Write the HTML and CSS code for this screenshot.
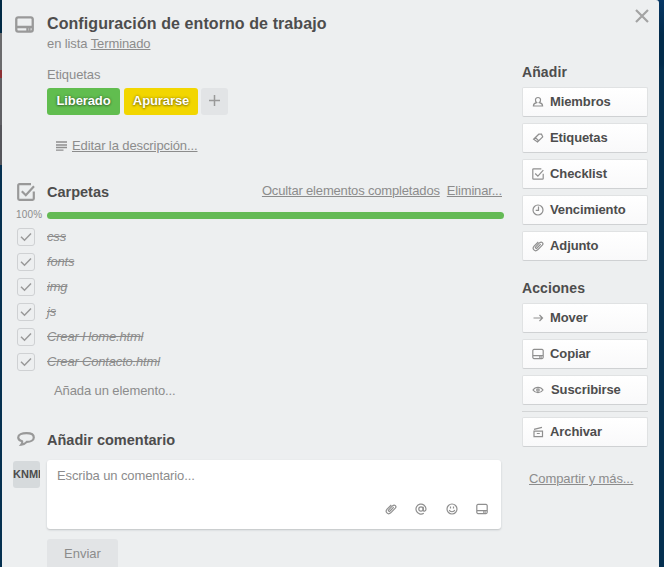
FILE: index.html
```html
<!DOCTYPE html>
<html lang="es">
<head>
<meta charset="utf-8">
<title>Configuración de entorno de trabajo</title>
<link rel="stylesheet" href="styles.css">
</head>
<body>
<svg class="sprite" aria-hidden="true">
  <symbol id="card" viewBox="0 0 18 16"><path d="M3 1.200h12a1.800 1.800 0 0 1 1.800 1.800v10a1.800 1.800 0 0 1-1.800 1.800H3A1.800 1.800 0 0 1 1.200 13V3A1.800 1.800 0 0 1 3 1.200zM1.500 10.400h15M11.800 10.400v4M13.300 12.700h1.500"/></symbol>
  <symbol id="check-box" viewBox="0 0 18 18"><path d="M14 1.200H2.400a1.200 1.200 0 0 0-1.200 1.200v13.200a1.200 1.200 0 0 0 1.200 1.200h13.200a1.200 1.200 0 0 0 1.200-1.200V8.500M4.800 8.200l4 4L17 3.300"/></symbol>
  <symbol id="tick" viewBox="0 0 12 10"><path d="M1 4.800 4.500 8.200 11 1.500"/></symbol>
  <symbol id="clip" viewBox="0 0 12 12"><path d="M8.700 4.200 5 8c-1 .9-2.200-.2-1.300-1.200L7.700 2.700c1.900-1.700 4.300.6 2.600 2.500L5.700 9.800c-2.700 2.500-6.100-1-3.600-3.600L6.300 2"/></symbol>
</svg>
<div class="window">
  <button class="close" aria-label="Cerrar"><svg viewBox="0 0 14 14"><path d="M1 1l12 12M13 1 1 13"/></svg></button>
  <main class="main">
    <header class="section-head card-head">
      <svg class="head-icon card-icon"><use href="#card"/></svg>
      <h1>Configuración de entorno de trabajo</h1>
    </header>
    <p class="in-list">en lista <a>Terminado</a></p>
    <h2 class="caption">Etiquetas</h2>
    <div class="labels">
      <span class="label green">Liberado</span>
      <span class="label yellow">Apurarse</span>
      <span class="label-add"><svg viewBox="0 0 11 11"><path d="M5.500 0v11M0 5.500h11"/></svg></span>
    </div>
    <div class="description"><svg viewBox="0 0 12 10"><path d="M0 1h11M0 4h11M0 6.500h11M0 9.200h7.500"/></svg><a>Editar la descripción...</a></div>

    <section class="checklist">
      <div class="section-head">
        <svg class="head-icon box-icon"><use href="#check-box"/></svg>
        <h2>Carpetas</h2>
        <div class="options"><a>Ocultar elementos completados</a><a>Eliminar...</a></div>
      </div>
      <div class="progress"><span>100%</span><div class="bar"></div></div>
      <ul>
        <li><i><svg><use href="#tick"/></svg></i><s>css</s></li>
        <li><i><svg><use href="#tick"/></svg></i><s>fonts</s></li>
        <li><i><svg><use href="#tick"/></svg></i><s>img</s></li>
        <li><i><svg><use href="#tick"/></svg></i><s>js</s></li>
        <li><i><svg><use href="#tick"/></svg></i><s>Crear Home.html</s></li>
        <li><i><svg><use href="#tick"/></svg></i><s>Crear Contacto.html</s></li>
      </ul>
      <p class="add-item">Añada un elemento...</p>
    </section>

    <section class="comment">
      <div class="section-head">
        <svg class="head-icon bubble" viewBox="0 0 18 14"><path d="M9.500 1.200c4.300 0 7.300 1.600 7.300 4.200s-3 4.400-7 4.500c-1.400 1.600-3.200 2.600-5.500 2.800.9-1.100 1.100-2.300.7-3.500C2.600 8.500 1.200 7.200 1.200 5.400c0-2.600 3.800-4.200 8.300-4.200z"/></svg>
        <h2>Añadir comentario</h2>
      </div>
      <div class="comment-row">
        <div class="avatar">KNMI</div>
        <div class="editor">
          <p>Escriba un comentario...</p>
          <div class="tools">
            <svg viewBox="0 0 12 12"><use href="#clip"/></svg>
            <svg viewBox="0 0 12 12"><circle cx="6" cy="6" r="2.200"/><path d="M8.200 3.800V7c0 1.700 2.800 1.500 2.800-1a5 5 0 1 0-2.200 4.200"/></svg>
            <svg viewBox="0 0 12 12"><circle cx="6" cy="6" r="5"/><path d="M4.500 3.500v2M7.500 3.500v2M3.200 7c.9 2.300 4.700 2.300 5.600 0"/></svg>
            <svg><use href="#card"/></svg>
          </div>
        </div>
      </div>
      <button class="send">Enviar</button>
    </section>
  </main>

  <aside class="side">
    <h3>Añadir</h3>
    <a class="action"><svg viewBox="0 0 12 12"><path d="M6 1.500c3.300 0 3 3.700 1.300 5.200 1.900.4 3.300 1.300 3.300 3.300H1.400c0-2 1.400-2.900 3.300-3.300C3 5.200 2.700 1.500 6 1.500z"/></svg>Miembros</a>
    <a class="action"><svg viewBox="0 0 12 12"><path d="M6.800 2.200 9.500 2.200 10.700 4.800 5.500 10 1.600 7.200zM2.200 6.800l1.800-.6L6.300 8.500"/></svg>Etiquetas</a>
    <a class="action"><svg class="bold"><use href="#check-box"/></svg>Checklist</a>
    <a class="action"><svg viewBox="0 0 12 12"><circle cx="6" cy="6" r="5"/><path d="M6.500 2.500v3.800H3.700"/></svg>Vencimiento</a>
    <a class="action"><svg viewBox="0 0 12 12"><use href="#clip"/></svg>Adjunto</a>
    <h3 class="second">Acciones</h3>
    <a class="action"><svg viewBox="0 0 12 12"><path d="M1.500 6h9M7.500 3l3 3-3 3"/></svg>Mover</a>
    <a class="action"><svg class="bold"><use href="#card"/></svg>Copiar</a>
    <a class="action follow"><svg viewBox="0 0 12 12"><path d="M1 6c2.300-3.500 7.700-3.500 10 0-2.300 3.500-7.700 3.500-10 0z"/><circle cx="6" cy="6" r="1.200"/></svg>Suscribirse</a>
    <hr>
    <a class="action"><svg viewBox="0 0 12 12"><path d="M2 5.200h8.500v5.500H2zM2 3.400 10 1.300M4.800 7.500h3"/></svg>Archivar</a>
    <a class="share">Compartir y más...</a>
  </aside>
</div>
</body>
</html>
```
FILE: styles.css
```css
* { box-sizing: border-box; margin: 0; padding: 0; }
body {
  width: 664px;
  height: 567px;
  overflow: hidden;
  padding-left: 2px;
  font: 13px/18px "Liberation Sans", Arial, sans-serif;
  letter-spacing: -0.1px;
  color: #8c8c8c;
  background:
    linear-gradient(#012a45 0 33px, #6b6b6d 33px 70px, #8c3034 70px 78px, #606064 78px 125px, #55555a 125px 165px, transparent 165px) 0 0 / 2px 100% no-repeat,
    linear-gradient(#063765 0, #022b4b 35px, #022b4b 64px, #053050 70px);
}
svg { fill: none; stroke: #8f8f8f; stroke-width: 1.200; display: block; flex: none; }
a { text-decoration: underline; }
.sprite { position: absolute; width: 0; height: 0; }
.window {
  position: relative;
  display: flex;
  justify-content: space-between;
  width: 657px;
  height: 567px;
  padding: 12px 11px 0 11px;
  background: #edeff0;
  border-top-right-radius: 3px;
}
.close { position: absolute; top: 9px; right: 10px; width: 14px; height: 14px; border: 0; background: none; }
.close svg { width: 14px; height: 14px; stroke: #a3a3a3; stroke-width: 2.200; }
.main { width: 491px; padding-left: 34px; }
.section-head { display: flex; align-items: center; height: 22px; margin-left: -30px; }
.head-icon { width: 18px; height: 18px; margin-right: 12px; stroke: #999; stroke-width: 2.200; }
.card-head { height: 23px; padding-top: 1px; margin-left: -32px; }
.card-icon { width: 19px; height: 17px; margin-right: 13px; }
h1, h2, h3 { color: #4d4d4d; font-weight: bold; letter-spacing: 0; }
h1 { font-size: 16px; line-height: 22px; letter-spacing: 0.090px; }
h2 { font-size: 14.500px; line-height: 18px; }
.in-list { line-height: 17px; }
.caption { margin-top: 14px; font-size: 13px; font-weight: normal; line-height: 18px; color: #8c8c8c; letter-spacing: -0.1px; }
.labels { display: flex; margin-top: 4px; }
.label {
  width: 73px;
  height: 27px;
  margin-right: 4px;
  border-radius: 3px;
  text-align: center;
  font-weight: bold;
  line-height: 26px;
  color: #fff;
  text-shadow: 0 0 3px rgba(0, 0, 0, .45), 0 1px 2px rgba(0, 0, 0, .3);
}
.green { background: #61bd4f; }
.yellow { width: 74px; margin-right: 3px; background: #f2d600; }
.label-add { width: 27px; height: 27px; padding: 7px 8px; border-radius: 3px; background: #e2e4e6; }
.label-add svg { width: 11px; height: 11px; stroke: #999; stroke-width: 1.500; }
.description { display: flex; align-items: center; margin: 22px 0 0 9px; }
.description svg { width: 12px; height: 10px; margin-right: 4px; stroke-width: 1.300; }
.checklist { margin-top: 26px; }
.options { display: flex; gap: 7px; margin: -2px 2px 0 auto; letter-spacing: -0.170px; }
.progress { display: flex; align-items: center; height: 14px; margin: 5px 0 0 -31px; }
.progress span { width: 31px; font-size: 10px; line-height: 12px; letter-spacing: 0.200px; }
.bar { flex: 1; height: 7px; border-radius: 4px; background: #64ba55; }
ul { list-style: none; margin: 2px 0 0 -30px; }
li { display: flex; align-items: center; height: 25.150px; letter-spacing: -0.180px; }
li i { display: grid; place-items: center; width: 18px; height: 18px; margin-right: 12px; border: 1px solid #cfd1d3; border-radius: 3px; }
li svg { width: 12px; height: 10px; stroke: #999; stroke-width: 1.500; }
s { font-style: italic; }
.add-item { margin: 7px 0 0 7px; }
.comment { margin-top: 29px; }
.bubble { height: 14px; margin-top: -2px; }
.comment-row { display: flex; margin: 9px 0 0 -34px; }
.avatar {
  width: 27px;
  height: 27px;
  margin: 1px 7px 0 0;
  overflow: hidden;
  border-radius: 3px;
  background: #d6dadc;
  color: #4d4d4d;
  font-size: 11px;
  font-weight: bold;
  line-height: 27px;
  letter-spacing: 0;
}
.editor {
  display: flex;
  flex-direction: column;
  justify-content: space-between;
  width: 454px;
  height: 69px;
  padding: 7px 13px 14px 10px;
  border-radius: 3px;
  background: #fff;
  box-shadow: 0 1px 2px #bfc2c4;
}
.tools { display: flex; justify-content: flex-end; gap: 18.500px; }
.tools svg { width: 12px; height: 12px; }
.tools svg:last-child { stroke-width: 1.800; }
.send { display: block; width: 71px; height: 30px; margin-top: 10px; border: 0; border-radius: 3px 3px 0 0; background: #e2e4e6; color: #8c8c8c; font: 13px/30px "Liberation Sans", Arial, sans-serif; }
.side { display: flex; flex-direction: column; width: 126px; padding-top: 51px; }
h3 { font-size: 14px; line-height: 18px; margin-bottom: 6px; letter-spacing: 0.100px; }
.action {
  display: flex;
  align-items: center;
  height: 30px;
  margin-bottom: 6px;
  padding: 0 10px 1px;
  border: 1px solid #e0e2e3;
  border-bottom-color: #cfd1d3;
  border-radius: 2px;
  background: linear-gradient(#fff, #f9f9fa);
  color: #4d4d4d;
  font-weight: bold;
  text-decoration: none;
}
.action svg { width: 12px; height: 12px; margin: 0 6px 0 -1px; }
.action .bold { stroke-width: 1.800; }
.follow svg { margin-right: 7px; }
.second { margin-top: 12px; }
hr { height: 1px; border: 0; background: #d3d5d6; margin-bottom: 5px; }
.share { margin: 17px 0 0 7px; }
```
